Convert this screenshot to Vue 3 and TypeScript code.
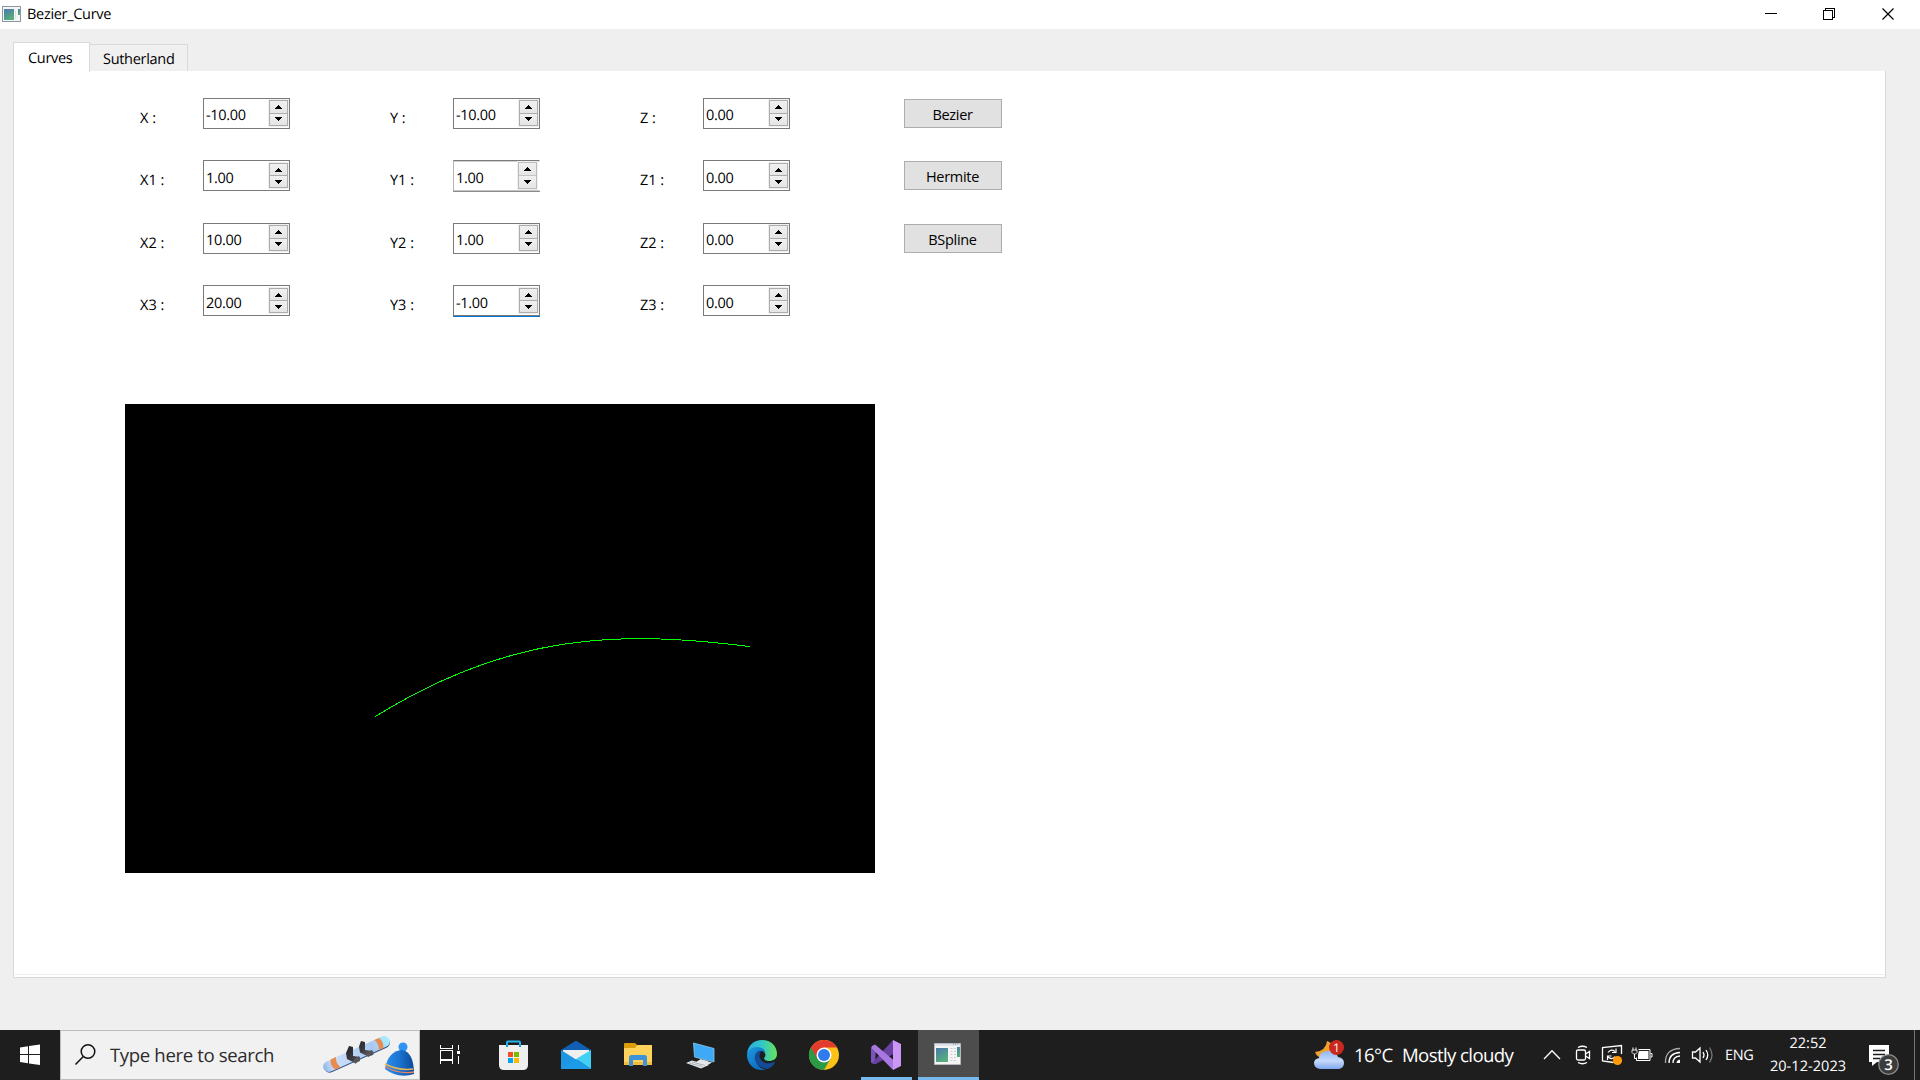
<script setup lang="ts">
interface Field {
  label: string
  value: string
  state?: 'hover' | 'focus'
}

interface FieldRow {
  tall: boolean
  fields: Field[]
  action?: string
}

const rows: FieldRow[] = [
  {
    tall: true,
    fields: [
      { label: 'X :', value: '-10.00' },
      { label: 'Y :', value: '-10.00' },
      { label: 'Z :', value: '0.00' },
    ],
    action: 'Bezier',
  },
  {
    tall: false,
    fields: [
      { label: 'X1 :', value: '1.00' },
      { label: 'Y1 :', value: '1.00', state: 'hover' },
      { label: 'Z1 :', value: '0.00' },
    ],
    action: 'Hermite',
  },
  {
    tall: true,
    fields: [
      { label: 'X2 :', value: '10.00' },
      { label: 'Y2 :', value: '1.00' },
      { label: 'Z2 :', value: '0.00' },
    ],
    action: 'BSpline',
  },
  {
    tall: false,
    fields: [
      { label: 'X3 :', value: '20.00' },
      { label: 'Y3 :', value: '-1.00', state: 'focus' },
      { label: 'Z3 :', value: '0.00' },
    ],
  },
]

// World units to canvas pixels
const control: [number, number][] = [[-10, -10], [1, 1], [10, 1], [20, -1]]
const points = control.map(([x, y]) => `${375 + x * 12.5} ${(234.8 - y * 7.8).toFixed(1)}`)
const curve = `M${points[0]}C${points[1]} ${points[2]} ${points[3]}`
</script>

<template>
  <div class="screen">
    <header class="titlebar">
      <svg class="app-icon" width="19" height="16" viewBox="0 0 19 16">
        <rect x=".5" y=".5" width="18" height="15" fill="#f3f5f7" stroke="#8d98a3" />
        <rect x="2" y="3" width="10" height="11" fill="url(#pane)" />
        <rect x="16" y="3" width="2" height="6" fill="url(#pane)" />
        <path d="M13.500 4v9" stroke="#dde1e5" />
        <defs>
          <linearGradient id="pane" x1="0" y1="0" x2="0.5" y2="1">
            <stop offset="0" stop-color="#4a78ad" />
            <stop offset="1" stop-color="#58ad7c" />
          </linearGradient>
        </defs>
      </svg>
      <span class="title">Bezier_Curve</span>
      <svg class="controls" width="160" height="29" viewBox="0 0 160 29" fill="none" stroke="#000" shape-rendering="crispEdges">
        <path d="M5 13.500h12" />
        <path d="M63.500 10.500h9v9h-9zM65.500 10v-1.500h9v9h-1.500" />
        <path d="M122.500 8.500l11 11M133.500 8.500l-11 11" shape-rendering="auto" stroke-width="1.200" />
      </svg>
    </header>

    <main class="body">
      <nav class="tabs">
        <div class="tab active">Curves</div>
        <div class="tab">Sutherland</div>
      </nav>
      <section class="panel">
        <div class="form">
          <div v-for="(row, r) in rows" :key="r" class="row" :class="{ tall: row.tall }">
            <div v-for="f in row.fields" :key="f.label" class="field">
              <label>{{ f.label }}</label>
              <div class="spin" :class="f.state">
                <span class="value">{{ f.value }}</span>
                <div class="steps">
                  <div class="step"><svg width="7" height="4" viewBox="0 0 7 4" shape-rendering="crispEdges"><path d="M3 0h1v1h1v1h1v1h1v1h-7v-1h1v-1h1v-1h1z" /></svg></div>
                  <div class="step"><svg width="7" height="4" viewBox="0 0 7 4" shape-rendering="crispEdges"><path d="M0 0h7v1h-1v1h-1v1h-1v1h-1v-1h-1v-1h-1v-1h-1z" /></svg></div>
                </div>
              </div>
            </div>
            <button v-if="row.action" type="button">{{ row.action }}</button>
          </div>
        </div>
        <svg class="canvas" width="750" height="469" viewBox="0 0 750 469">
          <path :d="curve" fill="none" stroke="#00ff00" shape-rendering="crispEdges" />
        </svg>
        <div class="panel-foot"></div>
      </section>
    </main>

    <footer class="taskbar">
      <svg width="60" height="50" viewBox="0 0 60 50">
        <path d="M20 17.400l8-1.200v7.900h-8zM29 16l11-1.400v9.500h-11zM20 25.100h8v8.200l-8-1.200zM29 25.100h11v10l-11-1.600z" fill="#fff" />
      </svg>
      <div class="search">
        <svg width="49" height="48" viewBox="0 0 49 48" fill="none" stroke="#111" stroke-width="1.500">
          <circle cx="27" cy="20.500" r="6.800" /><path d="M22.300 25.500L14.500 33.500" />
        </svg>
        <span>Type here to search</span>
        <svg class="doodle" width="100" height="48" viewBox="0 0 100 48">
          <defs>
            <linearGradient id="board" x1="0" x2="1"><stop offset="0" stop-color="#8fb6ea" /><stop offset=".15" stop-color="#cddff7" /><stop offset=".75" stop-color="#a9c9f2" /><stop offset="1" stop-color="#a8f0ff" /></linearGradient>
            <linearGradient id="hat" x1="0" x2="1"><stop offset="0" stop-color="#2d8ff0" /><stop offset=".5" stop-color="#1a73cf" /><stop offset="1" stop-color="#0d4b98" /></linearGradient>
            <linearGradient id="boot" x1="0" x2="1" y2="1"><stop offset="0" stop-color="#1b1b1f" /><stop offset=".5" stop-color="#3a3a3e" /><stop offset="1" stop-color="#808084" /></linearGradient>
          </defs>
          <g transform="translate(38.5 23) rotate(-24)">
            <rect x="-35.500" y="-4.500" width="71" height="11" rx="5.500" fill="#35588a" />
            <rect x="-36" y="-5.500" width="72" height="11" rx="5.500" fill="url(#board)" />
            <path d="M-26-5.500h6q-3 5.500 0 11h-6q-3-5.500 0-11zM22-5.500h5q3 5.500 0 11h-5q3-5.500 0-11z" fill="#e98a4e" />
          </g>
          <path d="M31 15l4 1v9l7 1v4l-5 2-8-4-1-6zM43 10l4 1v8l8 1v4l-5 1.500-8-4-1-6z" fill="url(#boot)" />
          <path d="M36 28l5-3 1 4-5 4zM48 22l6-3 2 4-6 3z" fill="#55565b" />
          <circle cx="85" cy="16" r="4.500" fill="#2f92f5" />
          <path d="M67 38q3-18 17-19 12 2 12 24-16 5-29-5z" fill="url(#hat)" />
          <path d="M67 33q14 7 28 5" fill="none" stroke="#e9b65a" stroke-width="1.500" />
          <path d="M67 35.500q14 8 29 5.500" fill="none" stroke="#ea8664" stroke-width="1.400" />
        </svg>
      </div>
      <svg width="63" height="50" viewBox="0 0 63 50" fill="none" stroke="#fff" shape-rendering="crispEdges">
        <path d="M20.500 15v4M32.500 15v4M20 18.500h13M20.500 20.500h12v9h-12zM20.500 34v-3.500h12v3.500M38.500 15v5M38.500 26v8" />
        <path d="M37 21h3v3h-3z" fill="#fff" stroke="none" />
      </svg>
      <svg width="62" height="50" viewBox="0 0 62 50">
        <path d="M24 17v-4.500q0-1 1-1h11q1 0 1 1v4.500" fill="none" stroke="#27b3ed" stroke-width="2" />
        <path d="M16 15h29v20q0 5-5 5h-19q-5 0-5-5z" fill="#efefef" />
        <path d="M24 15v2M37 15v2" stroke="#149ce0" stroke-width="2" />
        <path d="M25 22h5v5h-5z" fill="#f25022" /><path d="M31 22h5v5h-5z" fill="#7fba00" />
        <path d="M25 28h5v5h-5z" fill="#00a4ef" /><path d="M31 28h5v5h-5z" fill="#ffb900" />
      </svg>
      <svg width="62" height="50" viewBox="0 0 62 50">
        <path d="M16 20l13.500-8.500q1.500-.8 3 0L46 20v5H16z" fill="#0f5fb4" />
        <path d="M18 20h26v10H18z" fill="#efefef" />
        <path d="M16 20v19h30z" fill="#1e96e4" />
        <path d="M46 20v19L31 29z" fill="#41d0f5" /><path d="M16 39l15-10 15 10z" fill="#1c9be8" />
      </svg>
      <svg width="62" height="50" viewBox="0 0 62 50">
        <path d="M17 14q0-1 1-1h10l3 3v8H17z" fill="#dd9c09" />
        <path d="M17 18h11l2-3h15v20H17z" fill="#ffd25c" />
        <path d="M17 32h28v3H17z" fill="#f0bd42" />
        <path d="M22 36v-8.500q0-2.500 2.500-2.500h13q2.500 0 2.500 2.500V36h-4v-6H26v6z" fill="#3d92d8" />
      </svg>
      <svg width="62" height="50" viewBox="0 0 62 50">
        <path d="M24.500 13L45 18.500V32l-19.500-5z" fill="#3ea9f5" stroke="#8ac9ee" stroke-width=".8" />
        <path d="M31 29l8 2v3l-8-1z" fill="#cfd5d9" />
        <path d="M27 32l4-2.500 12 3-6 3.500zM17 33l6-2.500 17 4.500-8 3.500z" fill="#e4e8ea" />
        <path d="M20 33l13 3.500M23 32l13 3.500" stroke="#9aa2a8" stroke-width=".8" />
      </svg>
      <svg width="62" height="50" viewBox="0 0 62 50">
        <defs>
          <linearGradient id="edgeTop" x1="0" x2="1"><stop offset="0" stop-color="#2aa9e4" /><stop offset=".5" stop-color="#32c6c8" /><stop offset="1" stop-color="#66e35a" /></linearGradient>
          <linearGradient id="edgeLow" x1="0" y1="0" x2="1" y2="1"><stop offset="0" stop-color="#1b9be2" /><stop offset="1" stop-color="#0c5cb3" /></linearGradient>
        </defs>
        <path d="M16 24C17 15 23 10 31 10c9 0 15 6 15 14 0 5-4 7-8 7-3 0-5-1-5-3 2-2 2-4 0-6-3-4-11-5-17 2z" fill="url(#edgeTop)" />
        <path d="M16 25c1-5 5-8 10-8 4 0 8 2 8.500 6-1-1-2.500-2-4.500-2-5 0-7 5-5 10 2 6 7 9 11 8-12 4-20-5-20-14z" fill="url(#edgeLow)" />
        <path d="M25 24c-3 8 3 14 11 15 4-1 7-4 8-6.500.3-.8-.3-1-1-.6-6 3-13 1-14.500-5.500-.2-2 .5-4 2-5.400-2.500 0-4.500 1-5.500 3z" fill="#144a96" />
      </svg>
      <svg width="62" height="50" viewBox="0 0 62 50">
        <circle cx="31" cy="25" r="15" fill="#fbc116" />
        <path d="M31 25L18 17.500A15 15 0 0 0 31 40l6.500-11.200z" fill="#2a9a47" />
        <path d="M31 17.500h13A15 15 0 0 0 18 17.500l6.500 11.200z" fill="#e33b2e" />
        <circle cx="31" cy="25" r="7.500" fill="#fff" /><circle cx="31" cy="25" r="6" fill="#2d7bee" />
      </svg>
      <svg width="62" height="50" viewBox="0 0 62 50">
        <path d="M16 17.500l2-1.500 3 2-1 14-2 1.500-2-1z" fill="#7c53b8" />
        <path d="M38 10l2 13-19 11-3 0-1-1z" fill="#68429f" />
        <path d="M17 16l3-1.500 19 16v9.500l-2-1L16.500 18z" fill="#a878e0" />
        <path d="M38 10l8 4v22l-8 4z" fill="#cb96f5" />
        <path d="M6 47h51v3h-51z" fill="#76b9ed" />
      </svg>
      <svg width="62" height="50" viewBox="0 0 62 50">
        <path d="M1 0h61v50H1z" fill="#4d4d4d" />
        <path d="M1 47h61v3H1z" fill="#76b9ed" />
        <path d="M17.500 13.500h26v21h-26z" fill="#f4f4f4" stroke="#b4bac0" />
        <path d="M18 14h25v2H18z" fill="#dde3e8" /><path d="M36 14h6" stroke="#7d8994" stroke-dasharray="1 1" />
        <path d="M19 18h12v14H19z" fill="url(#pane)" /><path d="M40 17h3v10h-3z" fill="url(#pane)" />
        <path d="M34.500 18v14M38 18v14" stroke="#c9ccd0" stroke-width="2" stroke-dasharray="1 2" />
      </svg>

      <div class="weather">
        <svg width="32" height="32" viewBox="0 0 32 32">
          <defs><linearGradient id="cloud" x2="0" y2="1"><stop offset="0" stop-color="#8fb6f5" /><stop offset=".55" stop-color="#c6d9fa" /><stop offset="1" stop-color="#7fa8ee" /></linearGradient></defs>
          <path d="M13 2q-1 10-12 11 2 6 9 6 8-1 9-9 0-6-6-8z" fill="#f0a22c" />
          <path d="M5 19q1-7 9-7 8-1 10 6 6 1 6 6t-5 6H6q-6-1-6-6 0-4 5-5z" fill="url(#cloud)" />
          <circle cx="22.500" cy="8.500" r="7.500" fill="#c9281e" />
          <text x="22.500" y="13" text-anchor="middle" fill="#fff" font-size="12">1</text>
        </svg>
        <span class="temp">16°C</span>
        <span class="sky">Mostly cloudy</span>
      </div>

      <div class="tray">
        <svg width="30" height="50" viewBox="0 0 30 50"><path d="M7 29l8-8.200 8 8.200" /></svg>
        <svg width="30" height="50" viewBox="0 0 30 50">
          <rect x="9.500" y="20" width="9" height="10" rx="1.500" /><path d="M18.500 24l4-2.500v7l-4-2.500M11 17.500q4.500-2.500 9 0M11 32.500q4.500 2.500 9 0" />
        </svg>
        <svg width="30" height="50" viewBox="0 0 30 50">
          <path d="M24.500 24v-8.500l-19 2v13.500l11 1.500" /><path d="M11 22.500q3-4 7-1M19 18.500v4h-4M18 26.500q-3 4-7 .5M10.500 30v-4h4" stroke-width="1.200" />
          <circle cx="20.500" cy="30.500" r="4.600" fill="#ff9a0c" stroke="none" />
        </svg>
        <svg width="30" height="50" viewBox="0 0 30 50">
          <path d="M11.500 19.500h11.500v11h-13.500v-3M23.500 23.500h1.500v3.500h-1.500" stroke-width="1" /><path d="M12 21h9.500v8H11v-4.500z" fill="#fff" stroke="none" />
          <path d="M6 17.500v3M9 17.500v3M7.500 24v4.500h2" stroke-width="1" /><path d="M5 20h5v2.500l-1.500 1.500h-2L5 22.500z" stroke-width=".8" />
        </svg>
        <svg width="30" height="50" viewBox="0 0 30 50">
          <path d="M8.500 33Q8 19 23 18.500" stroke="#aaa" /><path d="M12 33Q12 23 23 22.500M16 33q0-6.500 7-7" />
          <path d="M19.500 33q0-3 3.500-3.500v3.500z" fill="#fff" stroke="none" />
        </svg>
        <svg width="32" height="50" viewBox="0 0 32 50">
          <path d="M5.500 22h3l4.500-4v14l-4.500-4h-3zM16 22q2 3 0 6M19 20q3.500 5 0 10" /><path d="M22.500 17.500q5 7.500 0 15" stroke="#777" />
        </svg>
        <span class="lang">ENG</span>
        <div class="clock"><span>22:52</span><span>20-12-2023</span></div>
        <svg class="notice" width="59" height="50" viewBox="0 0 59 50">
          <path d="M14 15h20v17H22l-5 4v-4h-3z" fill="#fff" stroke="none" />
          <path d="M18 20.500h12M18 24.500h12M18 28.500h7" stroke="#1e1e1e" />
          <circle cx="33.500" cy="34.500" r="9.800" fill="#3c3c3c" stroke="#8a8a8a" />
          <text x="33.500" y="40" text-anchor="middle" fill="#fff" stroke="none" font-size="15" font-weight="600">3</text>
        </svg>
      </div>
    </footer>
  </div>
</template>

<style>
body {
  margin: 0;
  overflow: hidden;
}
</style>

<style scoped>
.screen {
  width: 1920px;
  height: 1080px;
  display: flex;
  flex-direction: column;
  background: #efefef;
  color: #000;
  font-family: "Open Sans", "Noto Sans", sans-serif;
  font-size: 14.5px;
  letter-spacing: -0.3px;
  line-height: 20px;
  text-rendering: geometricPrecision;
  white-space: nowrap;
}
svg {
  display: block;
  flex: none;
}
.titlebar {
  height: 29px;
  display: flex;
  align-items: center;
  background: #fff;
}
.app-icon {
  margin: 0 6px 2px 2px;
}
.title {
  flex: 1;
  padding-top: 1px;
}
.body {
  height: 1001px;
  box-sizing: border-box;
  padding: 13px 34px 0 13px;
}
.tabs {
  height: 29px;
  display: flex;
  align-items: flex-end;
}
.tab {
  box-sizing: border-box;
  width: 98px;
  height: 27px;
  padding: 5px 0 0 13px;
  border: 1px solid #d9d9d9;
  border-width: 1px 1px 0 0;
  background: #f0f0f0;
}
.tab.active {
  position: relative;
  width: 77px;
  height: 30px;
  margin-bottom: -1px;
  padding: 6px 0 0 14px;
  border-left-width: 1px;
  background: #fff;
}
.panel {
  display: flex;
  flex-direction: column;
  box-sizing: border-box;
  height: 907px;
  padding: 27px 0 0 111px;
  border: 1px solid #d9d9d9;
  border-top: 0;
  background: #fff;
}
.form {
  height: 306px;
}
.row {
  display: flex;
  height: 63px;
}
.row.tall {
  height: 62px;
}
.field {
  display: flex;
  width: 250px;
}
label {
  width: 63px;
  padding: 11px 0 0 15px;
  letter-spacing: 0;
}
.spin {
  box-sizing: border-box;
  display: flex;
  justify-content: space-between;
  width: 87px;
  height: 31px;
  border: 1px solid #7a7a7a;
  background: #fff;
}
.value {
  padding: 7.5px 0 0 2px;
}
.tall .value {
  padding-top: 6.5px;
}
.steps {
  display: flex;
  flex-direction: column;
  box-sizing: border-box;
  width: 19px;
  height: 25px;
  margin: 2px 1px 0 0;
  border: 1px solid #acacac;
  outline: 1px solid #f0f0f0;
  background: #acacac;
  gap: 1px;
}
.tall .steps {
  height: 26px;
  margin-top: 1px;
}
.step {
  flex: 1;
  display: flex;
  align-items: center;
  justify-content: center;
  background: linear-gradient(#f0f0f0, #e5e5e5);
}
.spin.hover {
  border-color: #7a7a7a transparent #c4c4c4 #b5b5b5;
  box-shadow: inset 0 1px #d0d0d0, 0 1px #8c8c8c;
}
.hover .steps {
  height: 27px;
  margin: 1px 2px 0 0;
  border-color: #bcbcbc;
  background: #c4c4c4;
}
.spin.focus {
  box-shadow: 0 1px #0078d7;
}
button {
  box-sizing: border-box;
  width: 98px;
  height: 29px;
  margin: 1px 0 0 29px;
  padding: 2px 1px 0 0;
  border: 1px solid #adadad;
  background: #e1e1e1;
  color: #000;
  font: inherit;
  letter-spacing: inherit;
}
.canvas {
  background: #000;
}
.panel-foot {
  height: 1px;
  margin: 101px 0 0 -111px;
  background: #f0f0f0;
}
.taskbar {
  display: flex;
  height: 50px;
  background: #1e1e1e;
  color: #fff;
}
.search {
  box-sizing: border-box;
  display: flex;
  align-items: center;
  width: 360px;
  border: 1px solid #bdbdbd;
  background: #f1f1f1;
  color: #2b2b2b;
  font-size: 18.6px;
  letter-spacing: -0.37px;
}
.search span {
  flex: 1;
  padding-top: 2px;
}
.doodle {
  margin-right: 1px;
}
.weather {
  display: flex;
  align-items: center;
  width: 223px;
  margin-left: 335px;
  font-size: 18.6px;
  letter-spacing: -0.6px;
}
.weather text,
.notice text {
  letter-spacing: 0;
}
.weather span {
  padding-top: 2px;
}
.temp {
  width: 48px;
  margin-left: 8px;
}
.tray {
  display: flex;
  align-items: center;
  box-sizing: border-box;
  width: 378px;
  border-right: 1px solid #777;
}
.tray svg {
  fill: none;
  stroke: #fff;
  stroke-width: 1.3;
}
.lang {
  box-sizing: border-box;
  width: 42px;
  padding: 2px 0 0 6px;
}
.clock {
  display: flex;
  flex-direction: column;
  width: 94px;
  letter-spacing: 0.05px;
  line-height: 23px;
  text-align: center;
}
</style>
